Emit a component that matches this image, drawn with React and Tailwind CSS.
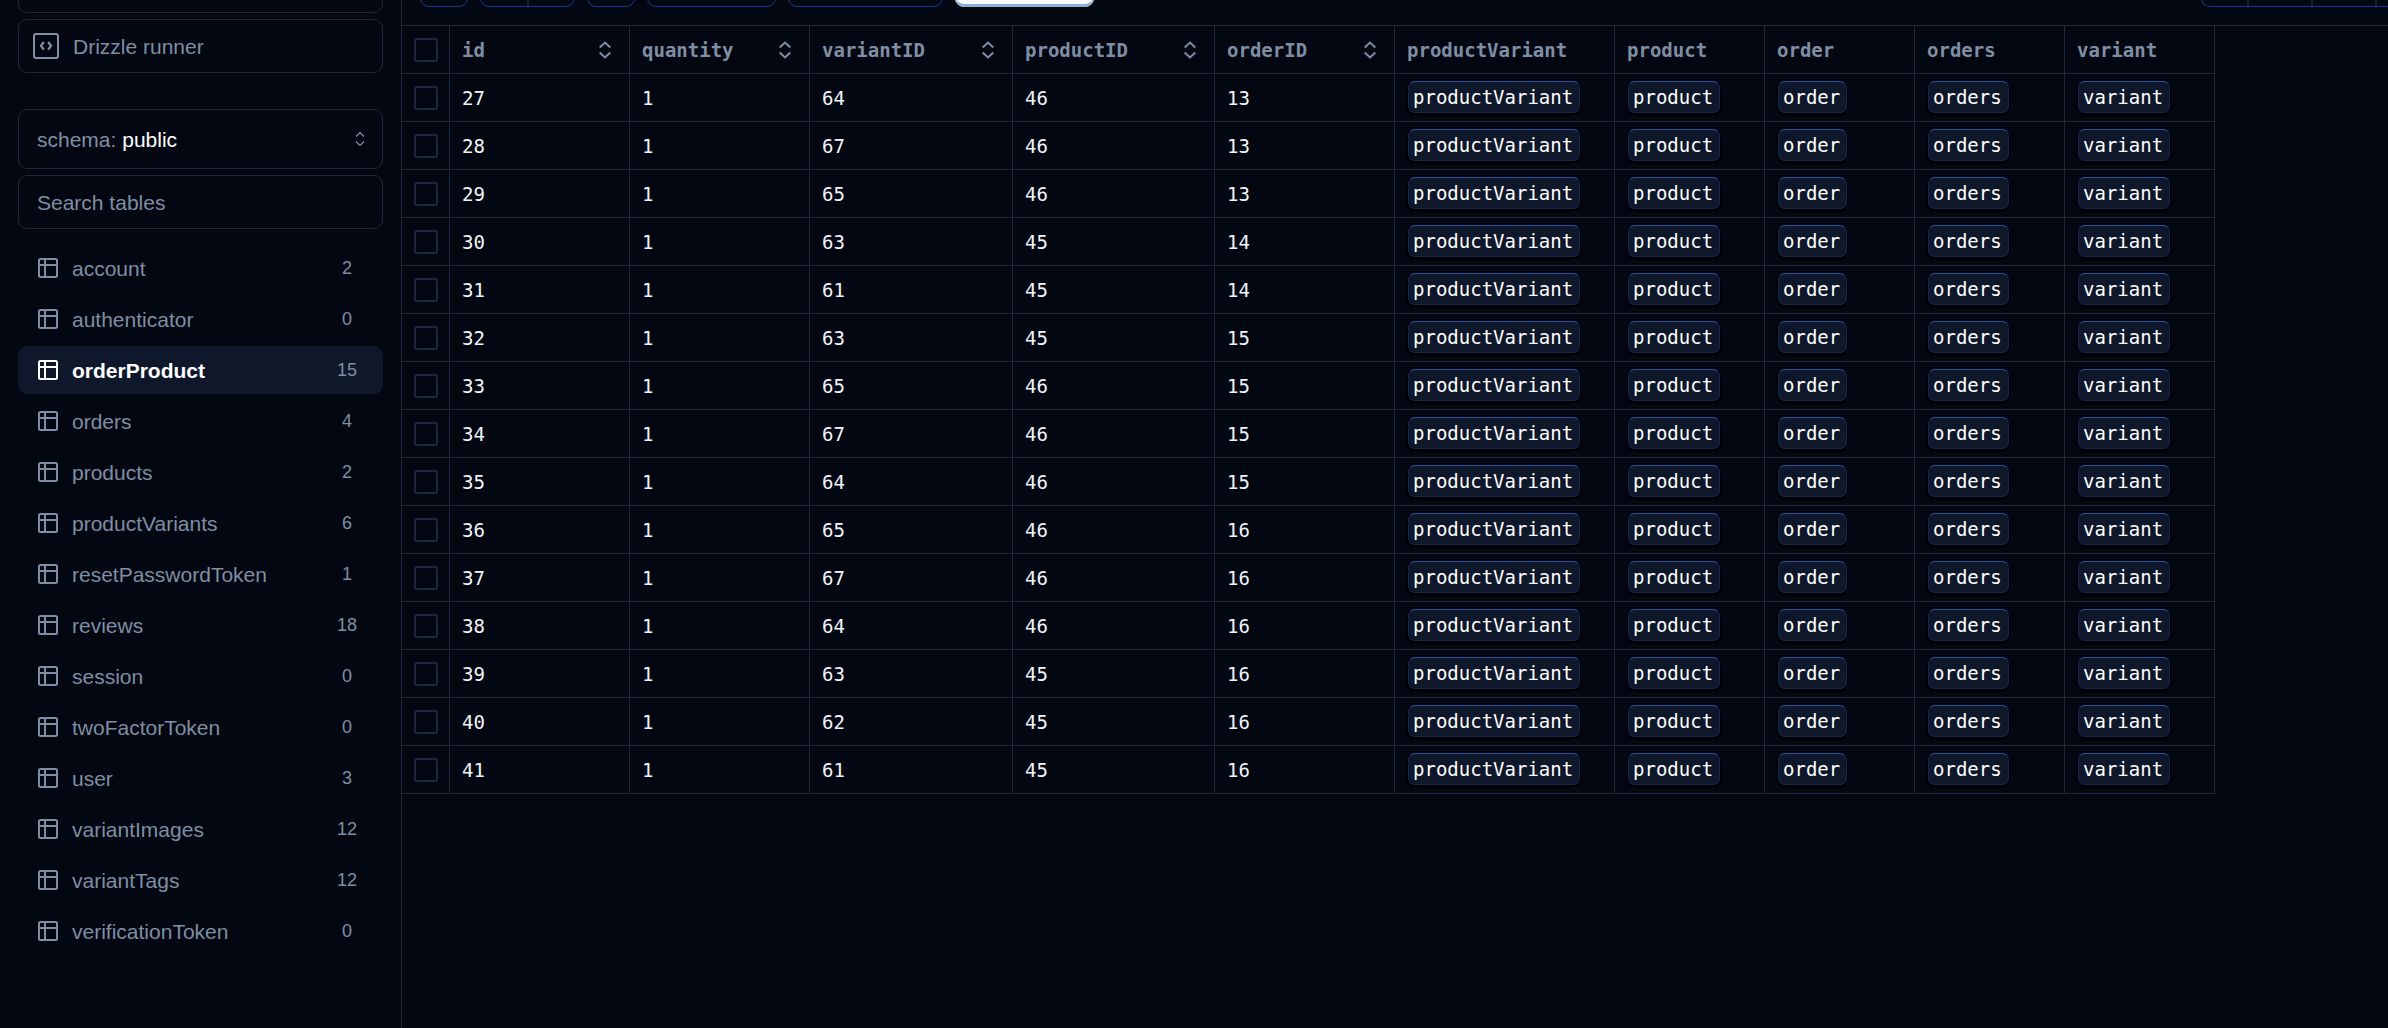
const tables = [
  { name: "account", count: 2 },
  { name: "authenticator", count: 0 },
  { name: "orderProduct", count: 15 },
  { name: "orders", count: 4 },
  { name: "products", count: 2 },
  { name: "productVariants", count: 6 },
  { name: "resetPasswordToken", count: 1 },
  { name: "reviews", count: 18 },
  { name: "session", count: 0 },
  { name: "twoFactorToken", count: 0 },
  { name: "user", count: 3 },
  { name: "variantImages", count: 12 },
  { name: "variantTags", count: 12 },
  { name: "verificationToken", count: 0 },
];

const columns = [
  { name: "id", width: "w-[180px]" },
  { name: "quantity", width: "w-[180px]" },
  { name: "variantID", width: "w-[203px]" },
  { name: "productID", width: "w-[202px]" },
  { name: "orderID", width: "w-[180px]" },
];

const relations = [
  { name: "productVariant", width: "w-[220px]" },
  { name: "product", width: "w-[150px]" },
  { name: "order", width: "w-[150px]" },
  { name: "orders", width: "w-[150px]" },
  { name: "variant", width: "w-[150px]" },
];

// id, quantity, variantID, productID, orderID
const rows = [
  [27, 1, 64, 46, 13],
  [28, 1, 67, 46, 13],
  [29, 1, 65, 46, 13],
  [30, 1, 63, 45, 14],
  [31, 1, 61, 45, 14],
  [32, 1, 63, 45, 15],
  [33, 1, 65, 46, 15],
  [34, 1, 67, 46, 15],
  [35, 1, 64, 46, 15],
  [36, 1, 65, 46, 16],
  [37, 1, 67, 46, 16],
  [38, 1, 64, 46, 16],
  [39, 1, 63, 45, 16],
  [40, 1, 62, 45, 16],
  [41, 1, 61, 45, 16],
];

const RunnerIcon = () => (
  <svg width="26" height="26" viewBox="0 0 26 26" fill="none" stroke="currentColor" strokeWidth="2">
    <rect x="1" y="1" width="24" height="24" rx="2" />
    <path d="M10.8 9 8 12.8l2.8 3.8M15.2 9l2.8 3.8-2.8 3.8" strokeWidth="2.3" />
  </svg>
);

const TableIcon = () => (
  <svg width="20" height="20" viewBox="0 0 20 20" fill="none" stroke="currentColor" strokeWidth="2">
    <rect x="1" y="1" width="18" height="18" rx="1.5" />
    <path d="M1 7h18M7 1v18" />
  </svg>
);

const SortIcon = () => (
  <svg width="14" height="20" viewBox="0 0 14 20" fill="none" stroke="currentColor" strokeWidth="2">
    <path d="m1.7 7.5 5.3-5 5.3 5M1.7 12.5l5.3 5 5.3-5" />
  </svg>
);

const Checkbox = ({ label }) => (
  <input
    type="checkbox"
    aria-label={label}
    className="block size-6 mx-auto appearance-none rounded-[3px] border-2 border-[#1d283a] checked:bg-slate-600"
  />
);

const Sidebar = () => (
  <aside className="w-[402px] shrink-0 border-r border-[#1d283a] px-[18px] font-['Liberation_Sans',Arial,sans-serif] text-[21px] leading-7 text-[#7f8ea3]">
    <div className="h-[13px] rounded-b-[9px] border border-t-0 border-[#1d283a]" />
    <button className="mt-1.5 flex h-[54px] w-full items-center gap-3.5 rounded-[9px] border border-[#1d283a] px-3.5">
      <RunnerIcon />
      <span className="pt-0.5">Drizzle runner</span>
    </button>

    <button className="mt-9 flex h-[60px] w-full items-center justify-between rounded-[9px] border border-[#1d283a] pl-[18px] pr-[17px]">
      <span className="pt-0.5">
        schema: <span className="text-white">public</span>
      </span>
      <svg width="10" height="14" viewBox="0 0 10 14" fill="none" stroke="currentColor" strokeWidth="1.2">
        <path d="m1 4.5 4-4 4 4M1 9.5l4 4 4-4" />
      </svg>
    </button>
    <input
      type="text"
      aria-label="Search tables"
      placeholder="Search tables"
      className="mt-1.5 block h-[54px] w-full rounded-[9px] border border-[#1d283a] bg-transparent px-[18px] pt-0.5 placeholder:text-[#7f8ea3]"
    />

    <nav className="mt-[15px] flex flex-col gap-[3px]">
      {tables.map((t) => (
        <a
          key={t.name}
          href={`#${t.name}`}
          className={
            t.name === "orderProduct"
              ? "flex h-12 items-center rounded-[9px] bg-[#0f172a] pl-5 pr-4 font-bold text-white"
              : "flex h-12 items-center rounded-[9px] pl-5 pr-4"
          }
        >
          <TableIcon />
          <span className="ml-3.5 flex-1 pt-0.5">{t.name}</span>
          <span className="w-10 text-center text-lg font-normal text-[#7f8ea3]">{t.count}</span>
        </a>
      ))}
    </nav>
  </aside>
);

// The toolbar is scrolled almost out of view, only its lower edge shows
const Toolbar = () => (
  <div className="flex h-[25px] items-end justify-between pb-[18px] pl-[18px]">
    <div className="flex gap-3">
      <div className="h-12 w-12 rounded-[9px] border border-[#1e3a8a]" />
      <div className="flex h-12 w-[95px] rounded-[9px] border border-[#1e3a8a]">
        <div className="w-12 border-r-2 border-[#151b28]" />
      </div>
      <div className="h-12 w-12 rounded-[9px] border border-[#1e3a8a]" />
      <div className="h-12 w-[129px] rounded-[9px] border border-[#1e3a8a]" />
      <div className="h-12 w-[155px] rounded-[9px] border border-[#1e3a8a]" />
      <div className="h-12 w-[139px] rounded-[9px] bg-slate-50 shadow-[inset_0_-3px_0_#8fb0d4]" />
    </div>
    <div className="flex h-12 w-[187px] rounded-l-[9px] border border-r-0 border-[#1e3a8a]">
      <div className="w-[47px] border-r-2 border-[#151b28]" />
      <div className="w-16 border-r-2 border-[#151b28]" />
      <div className="w-16 border-r-2 border-[#151b28]" />
    </div>
  </div>
);

const DataTable = () => (
  <div className="border-t border-[#1d283a] font-['DejaVu_Sans_Mono',monospace] text-[19px] leading-6">
    <table className="table-fixed border-separate border-spacing-0 w-[1813px]">
      <thead>
        <tr className="h-12 text-left text-[#7f8ea3]">
          <th className="w-12 border-b border-r border-[#1d283a] p-0">
            <Checkbox label="Select all rows" />
          </th>
          {columns.map((c) => (
            <th key={c.name} className={`${c.width} border-b border-r border-[#1d283a] py-0 pl-3 pr-[17px]`}>
              <button className="flex w-full items-center justify-between">
                {c.name}
                <SortIcon />
              </button>
            </th>
          ))}
          {relations.map((r) => (
            <th key={r.name} className={`${r.width} border-b border-r border-[#1d283a] px-3 py-0`}>
              {r.name}
            </th>
          ))}
        </tr>
      </thead>
      <tbody>
        {rows.map((row) => (
          <tr key={row[0]} className="h-12 text-slate-100">
            <td className="border-b border-r border-[#1d283a] p-0">
              <Checkbox label={`Select row ${row[0]}`} />
            </td>
            {row.map((value, i) => (
              <td key={i} className="border-b border-r border-[#1d283a] px-3 py-0">
                {value}
              </td>
            ))}
            {relations.map((r) => (
              <td key={r.name} className="border-b border-r border-[#1d283a] px-[13px] pt-[7px] align-top">
                <button className="block h-8 rounded-[7px] border border-[#172554] border-t-[#30509a] bg-[#0f172a] pl-1 pr-1.5 text-white shadow-[0_2px_1px_1px_#000]">
                  {r.name}
                </button>
              </td>
            ))}
          </tr>
        ))}
      </tbody>
    </table>
  </div>
);

export default function App() {
  return (
    <div className="flex min-h-screen bg-[#030711]">
      <Sidebar />
      <main className="min-w-0 flex-1 overflow-hidden">
        <Toolbar />
        <DataTable />
      </main>
    </div>
  );
}
